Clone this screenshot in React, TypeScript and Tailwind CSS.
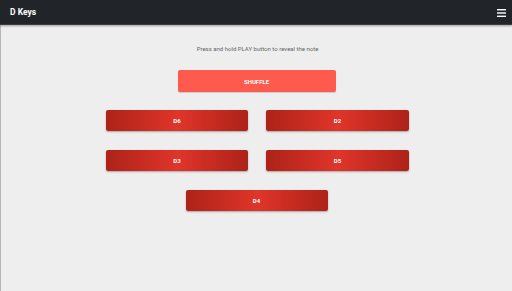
const KEYS = ["D6", "D2", "D3", "D5"];

const keyClass =
  "flex h-[21px] items-center justify-center rounded-[2px] bg-[linear-gradient(90deg,#ad2218_0%,#e0352a_50%,#ad2218_100%)] text-[6px] font-bold text-white shadow-[0_1px_2px_rgba(0,0,0,0.3)]";

export default function App() {
  return (
    <div className="flex h-[291px] w-[512px] flex-col bg-[#eeeeee] font-['Roboto',sans-serif]">
      <header className="relative z-10 flex h-[25px] shrink-0 items-center justify-between border-b border-[#3a3d42] bg-[#212529] pl-[10px] pr-[6px] shadow-[0_1px_2px_rgba(0,0,0,0.35)]">
        <span className="text-[8.5px] font-bold text-white">D Keys</span>
        <svg width="9" height="8" viewBox="0 0 9 8" className="mt-[1px]">
          <rect x="0" y="0" width="9" height="1.4" fill="#fff" />
          <rect x="0" y="3.3" width="9" height="1.4" fill="#fff" />
          <rect x="0" y="6.6" width="9" height="1.4" fill="#fff" />
        </svg>
      </header>
      <main className="flex flex-1 flex-col items-center border-l border-[#b5b5b5] pt-[20px]">
        <p className="pl-[2px] text-[6px] leading-[8px] text-[#666]">
          Press and hold PLAY button to reveal the note
        </p>
        <button className="mt-[17px] flex h-[22px] w-[158px] items-center justify-center rounded-[2px] bg-[#ff5a4e] text-[6px] font-bold text-white shadow-[0_1px_1px_rgba(0,0,0,0.15)]">
          SHUFFLE
        </button>
        <div className="mt-[18px] ml-[2px] grid grid-cols-[142px_143px] gap-x-[18px] gap-y-[19px]">
          {KEYS.map((k) => (
            <button key={k} className={keyClass}>
              {k}
            </button>
          ))}
        </div>
        <button className={`${keyClass} mt-[19px] w-[142px]`}>D4</button>
      </main>
    </div>
  );
}
